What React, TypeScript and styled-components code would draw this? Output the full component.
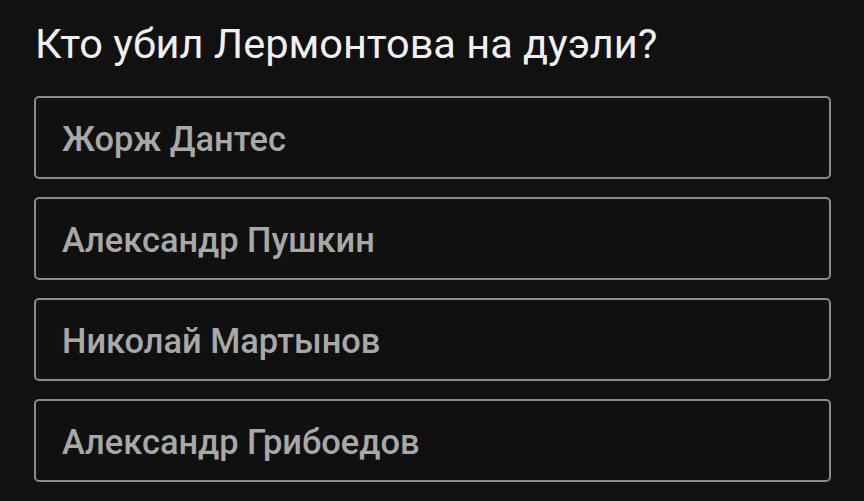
import React from "react";
import styled, { createGlobalStyle } from "styled-components";

const GlobalStyle = createGlobalStyle`
  html, body {
    margin: 0;
    padding: 0;
    background: #111111;
  }
  body {
    font-family: Roboto, "Noto Sans", sans-serif;
  }
`;

const Page = styled.div`
  display: flex;
  flex-direction: column;
  padding: 19px 33px 0 34px;
  height: 501px;
  box-sizing: border-box;
  background: #111111;
`;

const Question = styled.h1`
  margin: 0 0 27px 1px;
  font-size: 41.5px;
  font-weight: 400;
  line-height: 50px;
  color: #f0f0f0;
`;

const Options = styled.div`
  display: flex;
  flex-direction: column;
  gap: 18px;
`;

const Option = styled.button`
  display: flex;
  align-items: center;
  height: 83px;
  box-sizing: border-box;
  padding: 2px 26px 0;
  background: #101010;
  border: 2px solid #8a8a8a;
  border-radius: 5px;
  color: #a8a8a8;
  font-family: Roboto, "Noto Sans", sans-serif;
  font-size: 34.4px;
  font-weight: 500;
  text-align: left;
  cursor: pointer;
`;

const answers = [
  "Жорж Дантес",
  "Александр Пушкин",
  "Николай Мартынов",
  "Александр Грибоедов",
];

export default function App() {
  return (
    <>
      <GlobalStyle />
      <Page>
        <Question>Кто убил Лермонтова на дуэли?</Question>
        <Options>
          {answers.map((a) => (
            <Option key={a}>{a}</Option>
          ))}
        </Options>
      </Page>
    </>
  );
}
